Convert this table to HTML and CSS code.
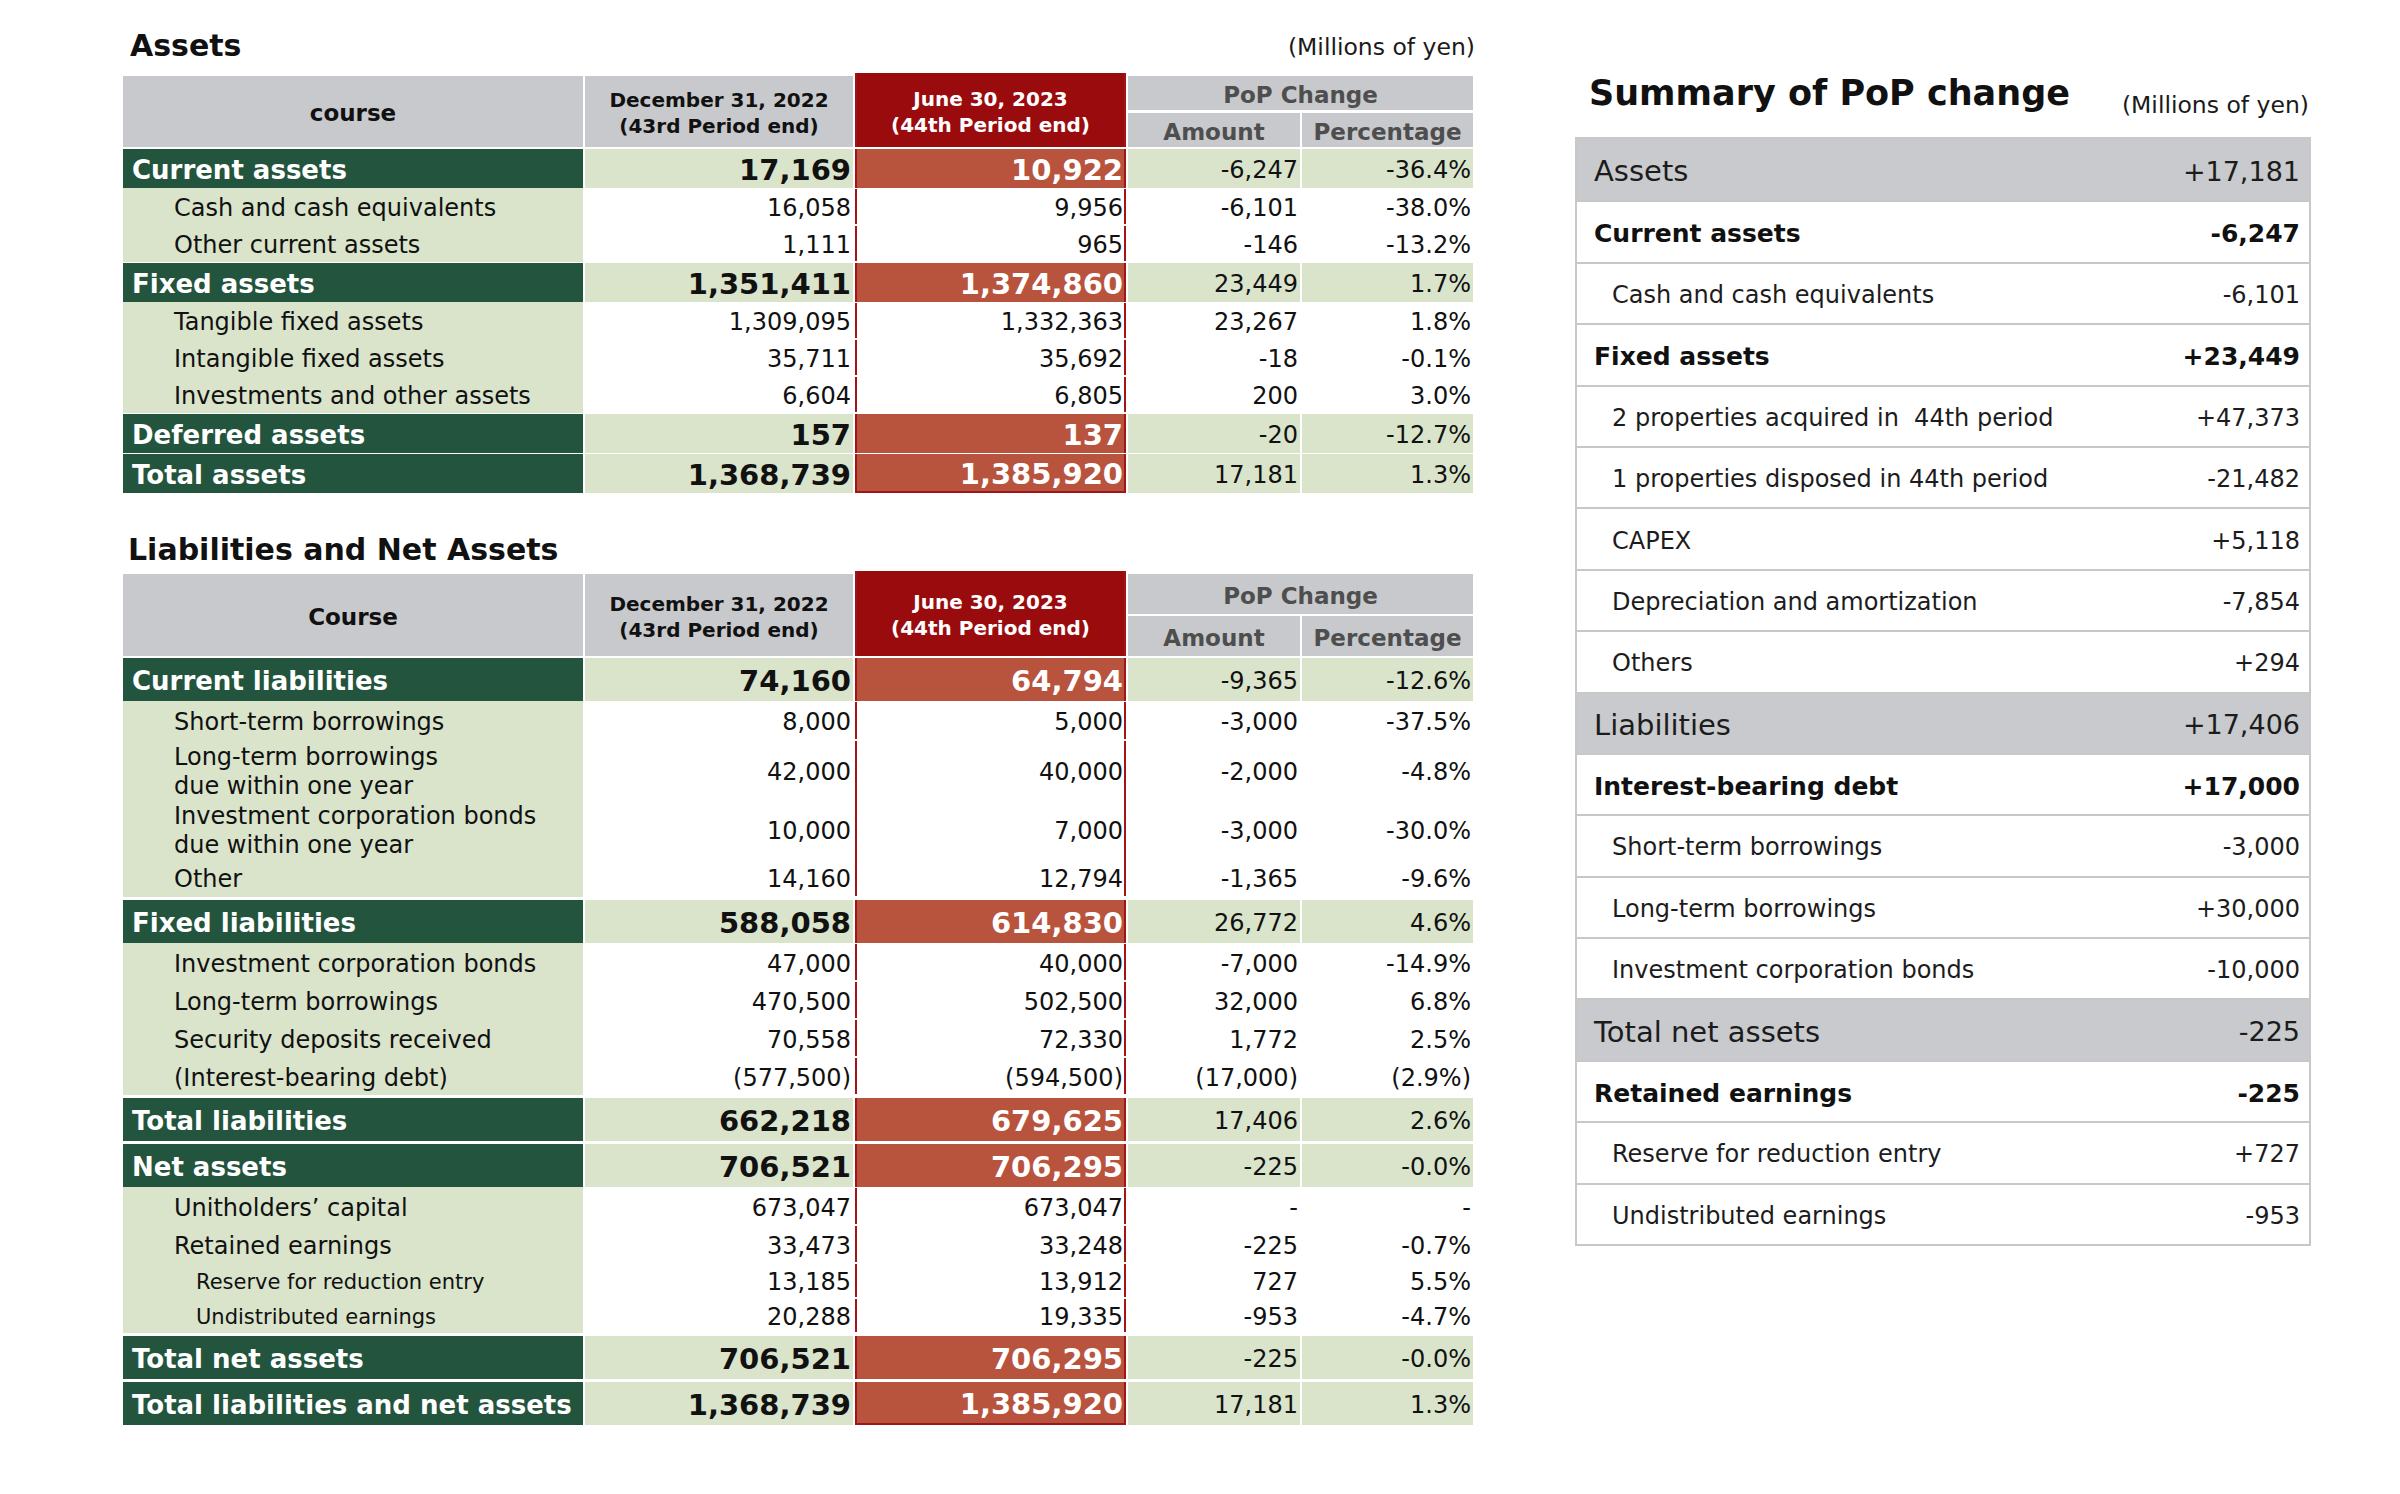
FILE: index.html
```html
<!DOCTYPE html>
<html lang="en">
<head>
<meta charset="utf-8">
<title>Balance sheet</title>
<link rel="stylesheet" href="styles.css">
</head>
<body>
<div class="page">
  <section class="left">
    <div class="title-row">
      <h2 class="sec-title">Assets</h2>
      <span class="unit">(Millions of yen)</span>
    </div>
    <div class="bs assets">
      <div class="hdr">
        <div class="h-course">course</div>
        <div class="h-dec">December 31, 2022<br>(43rd Period end)</div>
        <div class="h-jun">June 30, 2023<br>(44th Period end)</div>
        <div class="h-pop">PoP Change</div>
        <div class="h-amt">Amount</div>
        <div class="h-pct">Percentage</div>
      </div>
      <div class="row major first"><div class="lbl">Current assets</div><div class="dec">17,169</div><div class="jun">10,922</div><div class="amt">-6,247</div><div class="pct">-36.4%</div></div>
      <div class="row sub"><div class="lbl">Cash and cash equivalents</div><div class="dec">16,058</div><div class="jun">9,956</div><div class="amt">-6,101</div><div class="pct">-38.0%</div></div>
      <div class="row sub"><div class="lbl">Other current assets</div><div class="dec">1,111</div><div class="jun">965</div><div class="amt">-146</div><div class="pct">-13.2%</div></div>
      <div class="row major"><div class="lbl">Fixed assets</div><div class="dec">1,351,411</div><div class="jun">1,374,860</div><div class="amt">23,449</div><div class="pct">1.7%</div></div>
      <div class="row sub"><div class="lbl">Tangible fixed assets</div><div class="dec">1,309,095</div><div class="jun">1,332,363</div><div class="amt">23,267</div><div class="pct">1.8%</div></div>
      <div class="row sub"><div class="lbl">Intangible fixed assets</div><div class="dec">35,711</div><div class="jun">35,692</div><div class="amt">-18</div><div class="pct">-0.1%</div></div>
      <div class="row sub"><div class="lbl">Investments and other assets</div><div class="dec">6,604</div><div class="jun">6,805</div><div class="amt">200</div><div class="pct">3.0%</div></div>
      <div class="row major"><div class="lbl">Deferred assets</div><div class="dec">157</div><div class="jun">137</div><div class="amt">-20</div><div class="pct">-12.7%</div></div>
      <div class="row major last"><div class="lbl">Total assets</div><div class="dec">1,368,739</div><div class="jun">1,385,920</div><div class="amt">17,181</div><div class="pct">1.3%</div></div>
    </div>

    <div class="title-row second">
      <h2 class="sec-title">Liabilities and Net Assets</h2>
    </div>
    <div class="bs liab">
      <div class="hdr tall">
        <div class="h-course">Course</div>
        <div class="h-dec">December 31, 2022<br>(43rd Period end)</div>
        <div class="h-jun">June 30, 2023<br>(44th Period end)</div>
        <div class="h-pop">PoP Change</div>
        <div class="h-amt">Amount</div>
        <div class="h-pct">Percentage</div>
      </div>
      <div class="row major first"><div class="lbl">Current liabilities</div><div class="dec">74,160</div><div class="jun">64,794</div><div class="amt">-9,365</div><div class="pct">-12.6%</div></div>
      <div class="row sub tall"><div class="lbl">Short-term borrowings</div><div class="dec">8,000</div><div class="jun">5,000</div><div class="amt">-3,000</div><div class="pct">-37.5%</div></div>
      <div class="row sub two"><div class="lbl">Long-term borrowings<br>due within one year</div><div class="dec">42,000</div><div class="jun">40,000</div><div class="amt">-2,000</div><div class="pct">-4.8%</div></div>
      <div class="row sub two"><div class="lbl">Investment corporation bonds<br>due within one year</div><div class="dec">10,000</div><div class="jun">7,000</div><div class="amt">-3,000</div><div class="pct">-30.0%</div></div>
      <div class="row sub tall"><div class="lbl">Other</div><div class="dec">14,160</div><div class="jun">12,794</div><div class="amt">-1,365</div><div class="pct">-9.6%</div></div>
      <div class="row major"><div class="lbl">Fixed liabilities</div><div class="dec">588,058</div><div class="jun">614,830</div><div class="amt">26,772</div><div class="pct">4.6%</div></div>
      <div class="row sub"><div class="lbl">Investment corporation bonds</div><div class="dec">47,000</div><div class="jun">40,000</div><div class="amt">-7,000</div><div class="pct">-14.9%</div></div>
      <div class="row sub"><div class="lbl">Long-term borrowings</div><div class="dec">470,500</div><div class="jun">502,500</div><div class="amt">32,000</div><div class="pct">6.8%</div></div>
      <div class="row sub"><div class="lbl">Security deposits received</div><div class="dec">70,558</div><div class="jun">72,330</div><div class="amt">1,772</div><div class="pct">2.5%</div></div>
      <div class="row sub"><div class="lbl">(Interest-bearing debt)</div><div class="dec">(577,500)</div><div class="jun">(594,500)</div><div class="amt">(17,000)</div><div class="pct">(2.9%)</div></div>
      <div class="row major"><div class="lbl">Total liabilities</div><div class="dec">662,218</div><div class="jun">679,625</div><div class="amt">17,406</div><div class="pct">2.6%</div></div>
      <div class="row major"><div class="lbl">Net assets</div><div class="dec">706,521</div><div class="jun">706,295</div><div class="amt">-225</div><div class="pct">-0.0%</div></div>
      <div class="row sub"><div class="lbl">Unitholders’ capital</div><div class="dec">673,047</div><div class="jun">673,047</div><div class="amt">-</div><div class="pct">-</div></div>
      <div class="row sub"><div class="lbl">Retained earnings</div><div class="dec">33,473</div><div class="jun">33,248</div><div class="amt">-225</div><div class="pct">-0.7%</div></div>
      <div class="row sub deep"><div class="lbl">Reserve for reduction entry</div><div class="dec">13,185</div><div class="jun">13,912</div><div class="amt">727</div><div class="pct">5.5%</div></div>
      <div class="row sub deep"><div class="lbl">Undistributed earnings</div><div class="dec">20,288</div><div class="jun">19,335</div><div class="amt">-953</div><div class="pct">-4.7%</div></div>
      <div class="row major"><div class="lbl">Total net assets</div><div class="dec">706,521</div><div class="jun">706,295</div><div class="amt">-225</div><div class="pct">-0.0%</div></div>
      <div class="row major last"><div class="lbl">Total liabilities and net assets</div><div class="dec">1,368,739</div><div class="jun">1,385,920</div><div class="amt">17,181</div><div class="pct">1.3%</div></div>
    </div>
  </section>

  <section class="right">
    <div class="sum-head">
      <h2 class="sum-title">Summary of PoP change</h2>
      <span class="sum-unit">(Millions of yen)</span>
    </div>
    <div class="sum">
      <div class="srow sec"><span>Assets</span><span class="v">+17,181</span></div>
      <div class="srow strong"><span>Current assets</span><span class="v">-6,247</span></div>
      <div class="srow"><span>Cash and cash equivalents</span><span class="v">-6,101</span></div>
      <div class="srow strong"><span>Fixed assets</span><span class="v">+23,449</span></div>
      <div class="srow"><span>2 properties acquired in&nbsp; 44th period</span><span class="v">+47,373</span></div>
      <div class="srow"><span>1 properties disposed in 44th period</span><span class="v">-21,482</span></div>
      <div class="srow"><span>CAPEX</span><span class="v">+5,118</span></div>
      <div class="srow"><span>Depreciation and amortization</span><span class="v">-7,854</span></div>
      <div class="srow"><span>Others</span><span class="v">+294</span></div>
      <div class="srow sec"><span>Liabilities</span><span class="v">+17,406</span></div>
      <div class="srow strong"><span>Interest-bearing debt</span><span class="v">+17,000</span></div>
      <div class="srow"><span>Short-term borrowings</span><span class="v">-3,000</span></div>
      <div class="srow"><span>Long-term borrowings</span><span class="v">+30,000</span></div>
      <div class="srow"><span>Investment corporation bonds</span><span class="v">-10,000</span></div>
      <div class="srow sec"><span>Total net assets</span><span class="v">-225</span></div>
      <div class="srow strong"><span>Retained earnings</span><span class="v">-225</span></div>
      <div class="srow"><span>Reserve for reduction entry</span><span class="v">+727</span></div>
      <div class="srow"><span>Undistributed earnings</span><span class="v">-953</span></div>
    </div>
  </section>
</div>
</body>
</html>
```

FILE: styles.css
```css
* { box-sizing: border-box; margin: 0; padding: 0; }

html, body { background: #ffffff; }

body {
  width: 2400px;
  height: 1494px;
  overflow: hidden;
  font-family: "DejaVu Sans", Verdana, sans-serif;
  color: #111111;
}

.page {
  display: flex;
  align-items: flex-start;
  padding-left: 123px;
}

/* ---------- left: balance sheet ---------- */
.left {
  width: 1350px;
  padding-top: 28px;
}

.title-row {
  display: flex;
  justify-content: space-between;
  align-items: flex-end;
  padding-left: 7px;
}

.title-row.second {
  margin-top: 39px;
  padding-left: 5px;
}

.sec-title {
  font-size: 30px;
  line-height: 36px;
  font-weight: bold;
}

.unit {
  font-size: 23.5px;
  line-height: 28px;
  margin-bottom: 3px;
  margin-right: -2px;
  color: #1a1a1a;
}

.bs { margin-top: 12px; }
.bs.liab { margin-top: 6px; }

.hdr,
.row {
  display: grid;
  grid-template-columns: 460px 268px 271px 172px 171px;
  column-gap: 2px;
}

.hdr {
  grid-template-rows: 34px 34px;
  row-gap: 3px;
}

.hdr.tall {
  grid-template-rows: 40px 40px;
  row-gap: 2px;
}

.hdr > div {
  background: #c7c9cc;
  display: flex;
  align-items: center;
  justify-content: center;
  text-align: center;
  font-weight: bold;
  padding-top: 3px;
}

.h-course { grid-column: 1; grid-row: 1 / 3; font-size: 23px; }
.h-dec { grid-column: 2; grid-row: 1 / 3; font-size: 20px; line-height: 26px; }
.hdr .h-jun {
  grid-column: 3;
  grid-row: 1 / 3;
  margin-top: -3px;
  background: #9a0b0e;
  color: #ffffff;
  font-size: 20px;
  line-height: 26px;
  border-left: 2px solid #a01417;
  border-right: 2px solid #a01417;
}
.h-pop { grid-column: 4 / 6; grid-row: 1; font-size: 23px; color: #4e4e4e; }
.h-amt { grid-column: 4; grid-row: 2; font-size: 23px; color: #4e4e4e; }
.h-pct { grid-column: 5; grid-row: 2; font-size: 23px; color: #4e4e4e; }

/* rows */
.row > div {
  display: flex;
  align-items: center;
  padding-top: 3px;
}

.row .dec,
.row .jun,
.row .amt,
.row .pct {
  justify-content: flex-end;
  padding-right: 2px;
  font-size: 24px;
}

.row .jun {
  border-left: 2px solid #a31417;
  border-right: 2px solid #a31417;
  padding-right: 1px;
}

.row.major { height: 39px; margin-top: 1px; }
.row.major.first { margin-top: 2px; }
.row.sub { height: 37px; }

.liab .row.major { height: 43px; margin-top: 3px; }
.liab .row.major.first { margin-top: 2px; }
.liab .row.sub { height: 38px; }
.liab .row.sub.tall { height: 39px; }
.liab .row.sub.two { height: 59px; }
.liab .row.sub.deep { height: 35px; }

.major .lbl {
  background: #23543e;
  color: #ffffff;
  font-weight: bold;
  font-size: 26px;
  padding-left: 9px;
  white-space: nowrap;
}

.sub .lbl {
  background: #d9e4cb;
  font-size: 24px;
  padding-left: 51px;
  white-space: nowrap;
}

.sub.two .lbl { line-height: 29px; }

.sub.deep .lbl {
  font-size: 21px;
  padding-left: 73px;
}

.major .dec {
  background: #d9e4cb;
  font-weight: bold;
  font-size: 29px;
}

.row.major .jun {
  background: #b8533e;
  color: #ffffff;
  font-weight: bold;
  font-size: 29px;
}

.sub .jun { margin: 1px 0; }

.major .amt,
.major .pct {
  background: #d9e4cb;
}

.row.last .jun { border-bottom: 2px solid #a31417; }

/* ---------- right: summary ---------- */
.right {
  width: 736px;
  margin-left: 102px;
  padding-top: 72px;
}

.sum-head {
  display: flex;
  justify-content: space-between;
  align-items: flex-end;
  padding-left: 14px;
  padding-right: 2px;
}

.sum-title {
  font-size: 35px;
  line-height: 42px;
  font-weight: bold;
  padding-bottom: 5px;
}

.sum-unit {
  font-size: 23.5px;
  line-height: 28px;
  color: #1a1a1a;
}

.sum {
  margin-top: 18px;
  border: 2px solid #c8c8c8;
}

.srow {
  display: flex;
  justify-content: space-between;
  align-items: center;
  height: 61.4px;
  padding: 3px 9px 0 35px;
  font-size: 24px;
  color: #1c1c1c;
  white-space: nowrap;
}

.srow + .srow { border-top: 2px solid #c8c8c8; }

.srow.sec {
  background: #c8cacd;
  font-size: 29px;
  padding-left: 17px;
}

.srow.sec .v { font-size: 27px; }

.srow.strong {
  font-weight: bold;
  font-size: 25px;
  padding-left: 17px;
  color: #111111;
}
```
